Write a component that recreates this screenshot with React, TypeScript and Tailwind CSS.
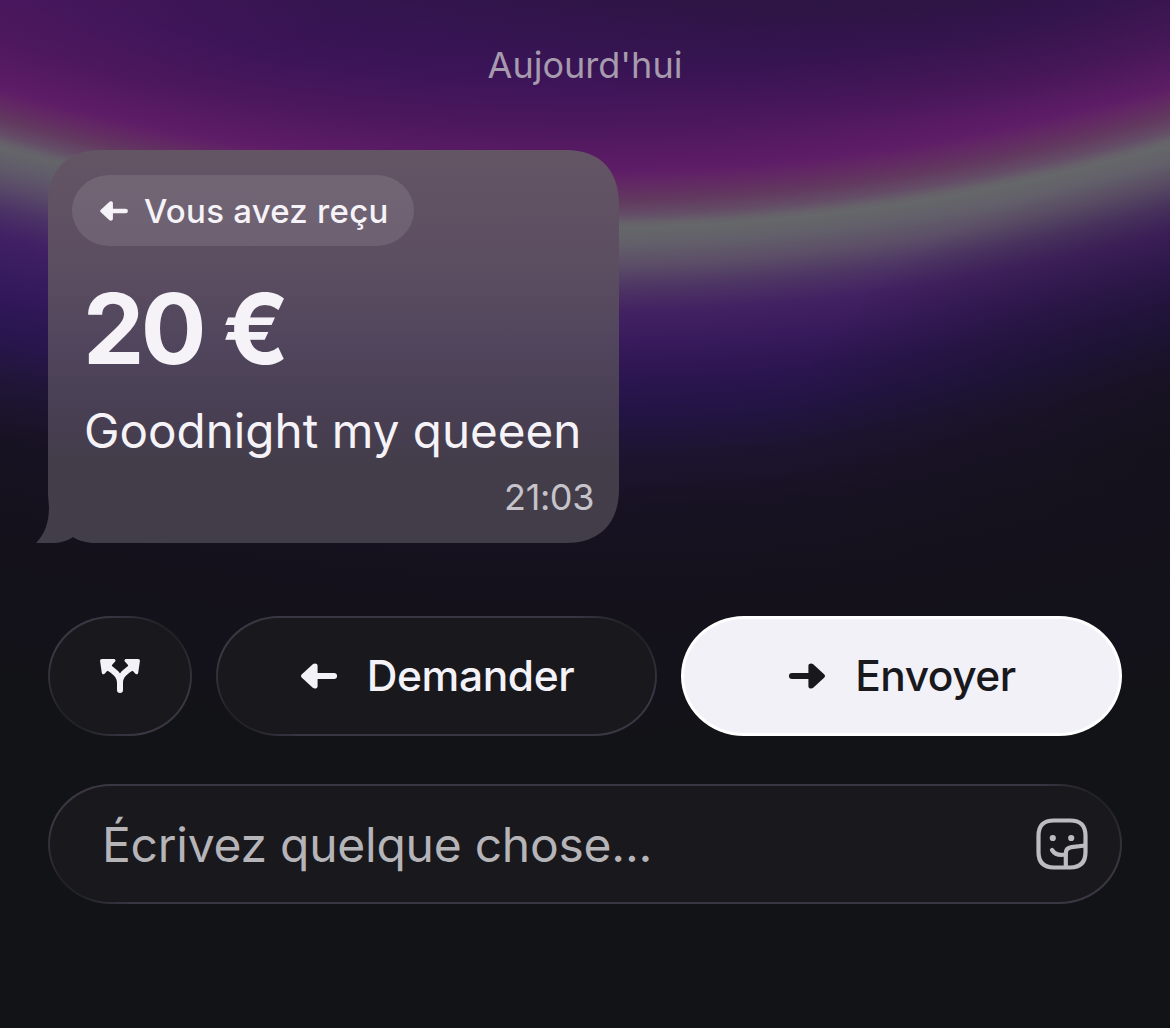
import type { ReactNode } from "react";

const ArrowIcon = ({ className }: { className: string }) => (
  <svg viewBox="0 0 36 26" className={className} fill="currentColor">
    <path d="M.9 14.7a2.3 2.3 0 0 1 0-3.4L11.8 1.2C13.4-.3 16.6.3 16.6 2.8V10h16.5a3 3 0 0 1 0 6H16.6v7.2c0 2.5-3.2 3.1-4.8 1.6z" />
  </svg>
);

const SplitIcon = () => (
  <svg viewBox="0 0 40 34" className="h-[34px] w-10" fill="currentColor">
    <path d="M2 0h11.5c2 0 2.6 1.6 1.4 2.8L12.2 5.7c-.5.6-.4 1 .1 1.5C15 9.5 18.5 11.8 20 14.5c1.5-2.7 5-5 7.7-7.3.5-.5.6-.9.1-1.5l-2.7-2.9C23.9 1.6 24.500 0 26.500 0H38c1.400 0 2.100.9 1.900 2.200l-1.700 11.600c-.3 1.700-2 2.100-3.100.8l-2-2.300c-.5-.5-1-.5-1.500-.1C26 16 23 18.500 23 24v7a3 3 0 0 1-6 0v-7c0-5.500-3-8-8.600-11.800-.5-.4-1-.4-1.500.1l-2 2.300c-1.100 1.300-2.800.9-3.100-.8L.1 2.200C-.1.9.6 0 2 0z" />
  </svg>
);

const StickerIcon = () => (
  <svg viewBox="0 0 52 52" className="h-[52px] w-[52px]" fill="none" stroke="currentColor" strokeWidth="4.2" strokeLinecap="round" strokeLinejoin="round">
    <path d="M18 2.500C7.500 2.500 2.500 7.500 2.500 18v16c0 10.500 5 15.500 15.500 15.500h16c10.500 0 15.500-5 15.500-15.500V18c0-10.500-5-15.500-15.500-15.500z" />
    <path d="M49 27.500l-13.500 1.700c-3.800.5-5.700 2.600-5.700 6.300V49" />
    <path d="M16 32c2.600 4 7.500 5.700 13.500 4.500" />
    <circle cx="16.800" cy="20" r="3.100" fill="currentColor" stroke="none" />
    <circle cx="35.200" cy="20" r="3.100" fill="currentColor" stroke="none" />
  </svg>
);

// Pill whose outline fades on the top right and bottom left corners
const GlassPill = ({ className, children }: { className: string; children: ReactNode }) => (
  <div className={`h-[120px] rounded-[63px/60px] bg-[#3a3743] bg-[radial-gradient(circle_64px_at_calc(100%_-_24px)_18px,#232228_20%,transparent),radial-gradient(circle_64px_at_24px_calc(100%_-_18px),#232228_20%,transparent)] p-[2px] ${className}`}>
    <div className="flex h-full w-full items-center rounded-[61px/58px] bg-[#19181d]">{children}</div>
  </div>
);

const MessageBubble = () => (
  <div className="relative h-[393px] w-[571px] text-[#f5f3f8]">
    <svg viewBox="0 0 583 393" className="absolute top-0 -left-3 h-[393px] w-[583px]">
      <defs>
        <linearGradient id="bubble" x1="0" y1="0" x2="0" y2="1">
          <stop offset="0" stopColor="#635564" />
          <stop offset=".3" stopColor="#5c4e61" />
          <stop offset=".48" stopColor="#51465d" />
          <stop offset=".66" stopColor="#493f54" />
          <stop offset=".8" stopColor="#433d4a" />
          <stop offset="1" stopColor="#423e49" />
        </linearGradient>
      </defs>
      <path
        fill="url(#bubble)"
        d="M12 54C12 20 31 0 65 0h465c34 0 53 20 53 54v285c0 34-19 54-53 54H62c-11 0-19-2-25-6-6 4-13 6-22 6H0c9-9 13-21 13-36l-1-12z"
      />
    </svg>
    <div className="relative flex h-full flex-col items-start px-6 pt-[25px]">
      <div className="flex h-[71px] w-[342px] items-center rounded-[38px/36px] bg-white/10 pl-7">
        <ArrowIcon className="h-5 w-7" />
        <span className="ml-4 text-[33px] leading-10 font-medium tracking-[0.25px] whitespace-nowrap">Vous avez reçu</span>
      </div>
      <p className="mt-[33px] ml-[11px] text-[97.5px] leading-[100px] font-bold tracking-[-3.6px] whitespace-nowrap">20 €</p>
      <p className="mt-[19px] ml-3 text-[47.6px] leading-[66px] whitespace-nowrap">Goodnight my queeen</p>
      <p className="mt-[13px] mr-px self-end text-4xl leading-10 tracking-[-0.4px] text-[#c6c3ca]">21:03</p>
    </div>
  </div>
);

const App = () => {
  return (
    <div className="h-[1028px] w-[1170px] overflow-hidden bg-[radial-gradient(ellipse_520px_140px_at_920px_-20px,#1e152c66,transparent),radial-gradient(ellipse_340px_110px_at_0px_-10px,#5a1b6466,transparent),radial-gradient(ellipse_240px_150px_at_0px_290px,#3c1f7044,transparent),radial-gradient(ellipse_480px_300px_at_1260px_460px,#14111bee,#14111b66_50%,transparent),radial-gradient(circle_2650px_at_580px_-1900px,#32154c_1900px,#3a1457_1970px,#4b175d_2025px,#5f1d67_2072px,#622864_2084px,#62385f_2100px,#644d67_2115px,#66606a_2123px,#656769_2128px,#625f6a_2145px,#5c4e67_2165px,#4d3564_2188px,#432162_2212px,#371a5b_2245px,#2b154f_2280px,#231445_2312px,#1d1430_2355px,#171222_2410px,#14111b_2500px,#13121a_2600px,#121316_2650px)] font-['Inter','Liberation_Sans',sans-serif]">
      <div className="flex flex-col px-12">
        <p className="mt-[43px] text-center text-4xl leading-[44px] text-[#a79bae]">Aujourd'hui</p>

        <div className="mt-[63px]">
          <MessageBubble />
        </div>

        <div className="mt-[73px] flex gap-6">
          <GlassPill className="w-36">
            <div className="flex w-full justify-center text-[#f4f2f9]">
              <SplitIcon />
            </div>
          </GlassPill>
          <GlassPill className="w-[441px]">
            <div className="flex w-full items-center justify-center pl-0.5 text-[#f4f2f9]">
              <ArrowIcon className="h-[26px] w-9" />
              <span className="ml-[30px] text-[42.5px] leading-[52px] font-medium tracking-[-0.4px]">Demander</span>
            </div>
          </GlassPill>
          <button className="flex h-[120px] w-[441px] items-center justify-center rounded-[63px/60px] border-[3px] border-white bg-[#f2f1f7] pl-0.5 text-[#19181d]">
            <ArrowIcon className="h-[26px] w-9 rotate-180" />
            <span className="ml-[30px] text-[42.5px] leading-[52px] font-medium tracking-[-0.5px]">Envoyer</span>
          </button>
        </div>

        <div className="mt-12">
          <GlassPill className="w-full">
            <div className="flex w-full items-center justify-between pr-8 pl-[52px] text-[#bdbcbf]">
              <span className="pt-0.5 text-5xl tracking-[-0.25px] text-[#b5b4b8]">Écrivez quelque chose...</span>
              <StickerIcon />
            </div>
          </GlassPill>
        </div>
      </div>
    </div>
  );
};

export default App;
